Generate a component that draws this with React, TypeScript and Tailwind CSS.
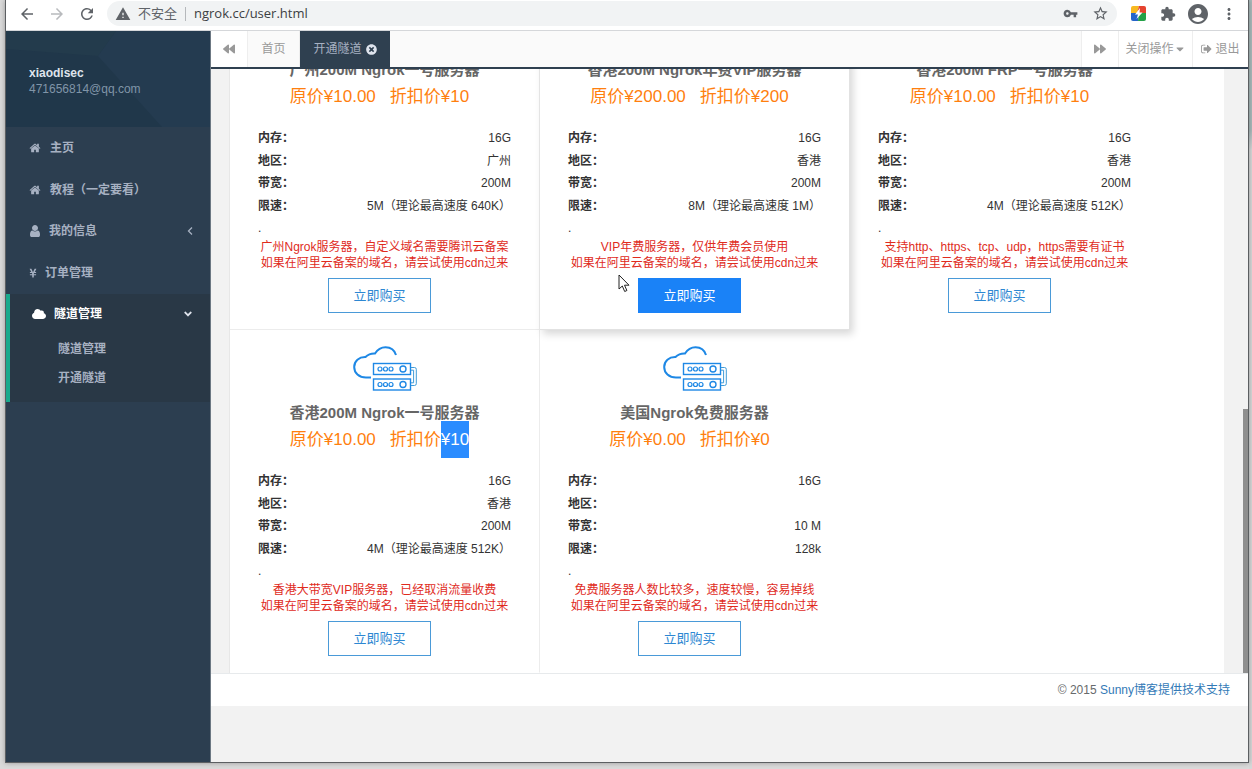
import React from "react";
import { FaAngleDown, FaBackward, FaCaretDown, FaCloud, FaForward, FaTimesCircle, FaYenSign } from "react-icons/fa";
import { MdAccountCircle, MdArrowBack, MdArrowForward, MdExtension, MdMoreVert, MdRefresh, MdStarBorder, MdVpnKey, MdWarning } from "react-icons/md";

type Server = {
  name: string;
  price: string;
  discount: string;
  region: string;
  bandwidth: string;
  limit: string;
  note: string[];
  variant?: "hover";
  selected?: boolean;
  edge: string;
};

const DOMAIN_NOTE = "如果在阿里云备案的域名，请尝试使用cdn过来";

const servers: Server[] = [
  { name: "广州200M Ngrok一号服务器", price: "10.00", discount: "10", region: "广州", bandwidth: "200M", limit: "5M（理论最高速度 640K）", note: ["广州Ngrok服务器，自定义域名需要腾讯云备案", DOMAIN_NOTE], edge: "border-[#ececec]" },
  { name: "香港200M Ngrok年费VIP服务器", price: "200.00", discount: "200", region: "香港", bandwidth: "200M", limit: "8M（理论最高速度 1M）", note: ["VIP年费服务器，仅供年费会员使用", DOMAIN_NOTE], variant: "hover", edge: "border-[#e2e2e2]" },
  { name: "香港200M FRP一号服务器", price: "10.00", discount: "10", region: "香港", bandwidth: "200M", limit: "4M（理论最高速度 512K）", note: ["支持http、https、tcp、udp，https需要有证书", DOMAIN_NOTE], edge: "border-transparent" },
  { name: "香港200M Ngrok一号服务器", price: "10.00", discount: "10", region: "香港", bandwidth: "200M", limit: "4M（理论最高速度 512K）", note: ["香港大带宽VIP服务器，已经取消流量收费", DOMAIN_NOTE], selected: true, edge: "border-r-[#ececec] border-b-transparent" },
  { name: "美国Ngrok免费服务器", price: "0.00", discount: "0", region: "", bandwidth: "10 M", limit: "128k", note: ["免费服务器人数比较多，速度较慢，容易掉线", DOMAIN_NOTE], edge: "border-transparent" },
];

function Glyph({ d, className }: { d: string; className?: string }) {
  return (
    <svg viewBox="0 0 1792 1792" fill="currentColor" className={className} aria-hidden="true">
      <path d={d} />
    </svg>
  );
}

const HOME = "M1472 992v480q0 26-19 45t-45 19h-384v-384h-256v384h-384q-26 0-45-19t-19-45v-480q0-1 .5-3t.5-3l575-474 575 474q1 2 1 6zm223-69l-62 74q-8 9-21 11h-3q-13 0-21-7l-692-577-692 577q-12 8-24 7-13-2-21-11l-62-74q-8-10-7-23.5t11-21.5l719-599q32-26 76-26t76 26l244 204v-195q0-14 9-23t23-9h192q14 0 23 9t9 23v408l219 182q10 8 11 21.5t-7 23.5z";
const USER = "M1536 1399q0 109-62.5 187t-150.5 78h-854q-88 0-150.5-78t-62.5-187q0-85 8.5-160.5t31.5-152 58.5-131 94-89 134.5-34.5q131 128 313 128t313-128q76 0 134.5 34.5t94 89 58.5 131 31.5 152 8.5 160.5zm-256-887q0 159-112.5 271.5t-271.5 112.5-271.5-112.5-112.5-271.5 112.5-271.5 271.5-112.5 271.5 112.5 112.5 271.5z";
const SIGN_OUT = "M640 1440q0 4 1 20t.5 26.5-3 23.5-10 19.5-20.5 6.5h-320q-119 0-203.5-84.5t-84.5-203.5v-704q0-119 84.5-203.5t203.5-84.5h320q13 0 22.5 9.5t9.5 22.5q0 4 1 20t.5 26.5-3 23.5-10 19.5-20.5 6.5h-320q-66 0-113 47t-47 113v704q0 66 47 113t113 47h312l11.5 1 11.5 3 8 5.5 7 9 2 13.5zm928-544q0 26-19 45l-544 544q-19 19-45 19t-45-19-19-45v-288h-448q-26 0-45-19t-19-45v-384q0-26 19-45t45-19h448v-288q0-26 19-45t45-19 45 19l544 544q19 19 19 45z";

function CloudServer() {
  return (
    <svg viewBox="0 0 64 45" className="mx-auto block h-[45px] w-16" fill="none" stroke="#1e88e5" aria-hidden="true">
      <path d="M18 31.500H13C6 31.500 1.200 27 1.200 21C1.200 15 6 10.800 12.500 11C15 8.500 18 7.300 22 7.500C24.500 3.500 28 1.200 32.500 1.200C37.500 1.200 41.500 4 43 9" strokeWidth="2" />
      <g strokeWidth="1.400">
        <rect x="20.500" y="17.500" width="37" height="11" />
        <rect x="20.500" y="33" width="37" height="11" />
        <circle cx="50" cy="23" r="3" />
        <circle cx="50" cy="38.500" r="3" />
        {[27, 32.5, 38].map((x) => (
          <g key={x} strokeWidth="1.200">
            <circle cx={x} cy="23" r="2" />
            <circle cx={x} cy="38.500" r="2" />
          </g>
        ))}
      </g>
      <path d="M58 21.500h3.500a1.800 1.800 0 0 1 1.800 1.800v14.400a1.800 1.800 0 0 1-1.800 1.800H58M58 24.200h2.600v12.600H58" strokeWidth="1" stroke="#3f9bd8" />
    </svg>
  );
}

function BrowserBar() {
  return (
    <header className="flex h-[31px] shrink-0 items-center border-b border-[#d5d7da] bg-white pr-2.5 pb-[3px] pl-3 text-[#5f6368]">
      <button aria-label="后退" className="w-[30px]"><MdArrowBack className="size-[18px]" /></button>
      <button aria-label="前进" className="w-[30px] text-[#b8babd]"><MdArrowForward className="size-[18px]" /></button>
      <button aria-label="重新加载" className="w-[29px]"><MdRefresh className="size-[18px]" /></button>
      <div className="flex h-[25px] flex-1 items-center rounded-full bg-[#f1f3f4] px-2">
        <MdWarning className="size-4" />
        <span className="ml-[7px] text-[13px]">不安全</span>
        <span className="mx-2 h-3.5 w-px bg-[#b5b8bb]" />
        <input aria-label="地址" readOnly value="ngrok.cc/user.html" className="min-w-0 flex-1 bg-transparent font-['Open_Sans','Noto_Sans_CJK_SC',sans-serif] text-[13px] text-[#3c4043] outline-none" />
        <button aria-label="密码"><MdVpnKey className="size-[15px]" /></button>
        <button aria-label="收藏" className="ml-3.5"><MdStarBorder className="size-[17px]" /></button>
      </div>
      <button aria-label="扩展" className="ml-3.5">
        <svg viewBox="0 0 15 15" className="size-[15px]" aria-hidden="true">
          <path d="M2 0h6L6 8H0V2a2 2 0 0 1 2-2z" fill="#f7b921" />
          <path d="M8 0h5a2 2 0 0 1 2 2v5H6z" fill="#e5432f" />
          <path d="M0 7h8l-1 8H2a2 2 0 0 1-2-2z" fill="#2563c9" />
          <path d="M8 7h7v6a2 2 0 0 1-2 2H7z" fill="#24a148" />
          <path d="M9 2 4 8.500h3L5.500 13 11.500 6.500H8.500z" fill="#fff" />
        </svg>
      </button>
      <button aria-label="扩展程序" className="ml-3.5"><MdExtension className="size-4" /></button>
      <button aria-label="账户" className="ml-2.5"><MdAccountCircle className="size-6" /></button>
      <button aria-label="更多" className="ml-2.5"><MdMoreVert className="size-[18px]" /></button>
    </header>
  );
}

function Sidebar() {
  return (
    <aside className="flex w-[205px] shrink-0 flex-col border-r border-[#6c7883] bg-[#2c3e50] text-xs font-semibold text-[#a7b1c2]">
      <div className="relative flex h-24 flex-col justify-center bg-[#20374a] pt-1 pl-[23px]">
        <svg viewBox="0 0 204 96" preserveAspectRatio="none" className="absolute inset-0 h-full w-full" aria-hidden="true">
          <path d="M0 0h110L92 25 0 18z" fill="#233b4c" />
          <path d="M110 0h94v96h-48L92 25z" fill="#243b50" />
        </svg>
        <strong className="relative leading-4 font-bold text-[#dfe4ed]">xiaodisec</strong>
        <span className="relative leading-4 font-normal text-[#8095a8]">471656814@qq.com</span>
      </div>
      <nav>
        <div className="grid h-[167px] grid-rows-4">
          <a href="#home" className="flex items-center pl-[23px]"><Glyph d={HOME} className="mr-[9px] size-3" />主页</a>
          <a href="#guide" className="flex items-center pl-[23px]"><Glyph d={HOME} className="mr-[9px] size-3" />教程（一定要看）</a>
          <a href="#profile" className="flex items-center pr-4 pl-[22px]">
            <Glyph d={USER} className="mr-[7px] size-3.5" />我的信息
            <svg viewBox="0 0 8 10" className="ml-auto h-2.5 w-2" fill="none" stroke="currentColor" strokeWidth="1.300" aria-hidden="true"><path d="M6 1.500 2.500 5 6 8.500" /></svg>
          </a>
          <a href="#orders" className="flex items-center pl-[22px]"><FaYenSign className="mr-[7px] h-2.5 w-2.5" />订单管理</a>
        </div>
        <div className="border-l-4 border-[#19aa8d] bg-[#293846] pb-2.5">
          <a href="#tunnels" className="flex h-10 items-center pr-4 pl-[22px] text-white"><FaCloud className="mr-2 size-3.5" />隧道管理<FaAngleDown className="ml-auto size-3 text-[#dfe4ed]" /></a>
          <a href="#list" className="flex h-[29px] items-center pl-12">隧道管理</a>
          <a href="#open" className="flex h-[29px] items-center pl-12">开通隧道</a>
        </div>
      </nav>
    </aside>
  );
}

function TabBar() {
  return (
    <div className="flex h-[38px] shrink-0 border-b-2 border-[#2f4050] bg-[#fafafa] text-xs text-[#999]">
      <button aria-label="向左" className="flex w-9 items-center justify-center bg-white"><FaBackward className="size-3" /></button>
      <button className="w-[53px] border-x border-[#eee]">首页</button>
      <button className="flex w-[90px] items-center justify-center gap-1 bg-[#2f4050] text-[#a7b1c2]">开通隧道<FaTimesCircle className="size-[11px] text-[#dfe4ed]" /></button>
      <button aria-label="向右" className="ml-auto flex w-[38px] items-center justify-center border-x border-[#eee] bg-white"><FaForward className="size-3" /></button>
      <button className="flex w-[74px] items-center justify-center border-r border-[#eee] bg-white">关闭操作<FaCaretDown className="size-3" /></button>
      <button className="flex w-[55px] items-center justify-center gap-0.5 bg-white"><Glyph d={SIGN_OUT} className="size-3" />退出</button>
    </div>
  );
}

function ServerCard({ server }: { server: Server }) {
  const hover = server.variant === "hover";
  const rows = [
    ["内存", "16G"],
    ["地区", server.region],
    ["带宽", server.bandwidth],
    ["限速", server.limit],
  ];
  return (
    <article className={`w-[310px] border-r border-b bg-white px-7 py-4 ${server.edge} ${hover ? "relative shadow-[3px_4px_8px_rgba(0,0,0,0.16)]" : ""}`}>
      <CloudServer />
      <h2 className="mt-3.5 text-center text-[15px] leading-4 font-bold whitespace-nowrap text-[#666]">{server.name}</h2>
      <p className="flex justify-center pr-2.5 text-[17px] leading-[37px] whitespace-nowrap text-[#ff7f0e]">
        <span className="mr-3.5">原价¥{server.price}</span>
        <span>折扣价</span>
        <span className={server.selected ? "bg-[#2a8cff] text-white" : ""}>¥{server.discount}</span>
      </p>
      <dl className="mt-3 grid h-[90px] grid-rows-4 text-xs text-[#333]">
        {rows.map(([label, value]) => (
          <div key={label} className="flex items-center justify-between">
            <dt className="font-bold">{label}：</dt>
            <dd>{value}</dd>
          </div>
        ))}
      </dl>
      <p className="text-xs leading-[22px] text-[#333]">.</p>
      <p className="text-center text-xs leading-4 whitespace-nowrap text-[#e02b1d]">
        {server.note[0]}<br />{server.note[1]}
      </p>
      <div className="mt-[7px] flex justify-center pr-2.5">
        <button className={`h-[35px] w-[103px] border text-[13px] ${hover ? "border-[#1a82f7] bg-[#1a82f7] text-white" : "border-[#4a9ad8] bg-white text-[#2d87d2]"}`}>立即购买</button>
      </div>
    </article>
  );
}

export default function App() {
  return (
    <div className="flex h-screen bg-[#dadada] font-['Liberation_Sans','Noto_Sans_CJK_SC',sans-serif]">
      <div className="relative mb-1.5 ml-[5px] flex min-w-0 flex-1 flex-col border-r border-b border-l border-[#5c5f62] bg-white shadow-[0_0_5px_rgba(0,0,0,0.3)]">
        <BrowserBar />
        <div className="flex min-h-0 flex-1">
          <Sidebar />
          <div className="flex min-w-0 flex-1 flex-col bg-[#f2f2f2]">
            <TabBar />
            <main className="flex min-h-0 flex-1 overflow-hidden">
              <div className="ml-[18px] flex min-w-0 flex-1 flex-col justify-end border-l border-[#e7e7e7] bg-white">
                <div className="flex shrink-0 flex-wrap">
                  {servers.map((server, i) => <ServerCard key={i} server={server} />)}
                </div>
              </div>
              <div className="flex w-6 shrink-0 flex-col items-end justify-end">
                <div className="h-[264px] w-[5px] bg-[#8f8f8f]" />
              </div>
            </main>
            <footer className="h-[33px] shrink-0 border-t border-[#e7eaec] bg-white pr-[18px] text-right text-xs leading-8 text-[#676a6c]">
              © 2015 <a href="#blog" className="text-[#337ab7]">Sunny博客提供技术支持</a>
            </footer>
            <div className="h-14 shrink-0" />
          </div>
        </div>
        <svg viewBox="0 0 12 19" className="absolute top-[274px] left-[612px] h-[19px] w-3" aria-hidden="true">
          <path d="M1 1v14l3.300-3 2.400 5.500 2.200-1-2.400-5.300H11z" fill="#fff" stroke="#222" strokeWidth="1" />
        </svg>
      </div>
      <div className="w-[3px] shrink-0 bg-[linear-gradient(to_bottom,#a9babb_0,#a9babb_130px,#d6d8d8_150px)]" />
    </div>
  );
}
